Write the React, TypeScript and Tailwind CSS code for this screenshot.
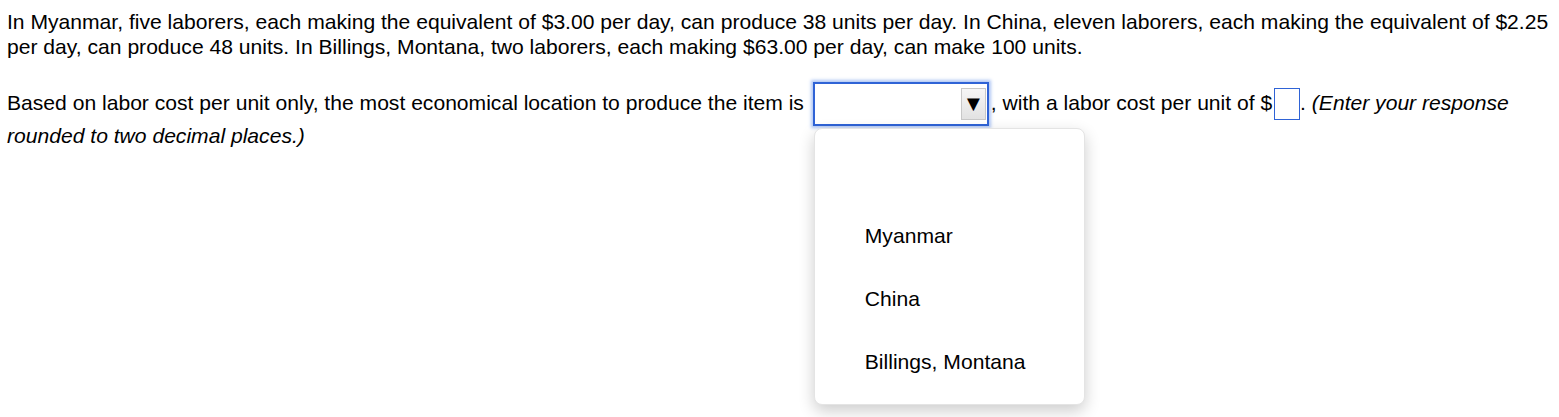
import React from "react";

export default function App() {
  return (
    <div
      className="relative w-[1559px] h-[417px] bg-white text-black px-[7px] pt-[9px] text-[21.1px] leading-[25px]"
      style={{ fontFamily: '"Liberation Sans", Arial, sans-serif' }}
    >
      <p>
        In Myanmar, five laborers, each making the equivalent of $3.00 per day, can produce 38 units per day. In China,
        eleven laborers, each making the equivalent of $2.25 per day, can produce 48 units. In Billings, Montana, two
        laborers, each making $63.00 per day, can make 100 units.
      </p>
      <p className="mt-[23px] leading-[20px]">
        Based on labor cost per unit only, the most economical location to produce the item is{" "}
        <span className="relative inline-block align-middle ml-[3px] mr-[2px]">
          <span className="flex items-center justify-end w-[176px] h-[44px] border-2 border-[#2f63d6] bg-white shadow-[0_0_3px_2px_rgba(80,130,230,0.45)] pr-[1px]">
            <span className="flex items-center justify-center w-[25px] h-[32px] border border-[#c8c8c8] bg-gradient-to-b from-[#f6f6f6] to-[#e2e2e2] text-[22px] leading-none text-black">
              ▼
            </span>
          </span>
          <span className="absolute left-[1px] top-[46px] z-10 w-[271px] h-[277px] rounded-[8px] border border-[#e4e4e4] bg-white shadow-[0_6px_16px_rgba(0,0,0,0.2)] py-[12px] leading-[25px]">
            <span className="flex h-[63px] items-center pl-[50px]"></span>
            <span className="flex h-[63px] items-center pl-[50px]">Myanmar</span>
            <span className="flex h-[63px] items-center pl-[50px]">China</span>
            <span className="flex h-[63px] items-center pl-[50px]">Billings, Montana</span>
          </span>
        </span>
        , with a labor cost per unit of ${" "}
        <span className="inline-block align-middle w-[26px] h-[32px] border border-[#2f63d6] bg-white -ml-[4px]"></span>
        . <i>(Enter your response rounded to two decimal places.)</i>
      </p>
    </div>
  );
}
